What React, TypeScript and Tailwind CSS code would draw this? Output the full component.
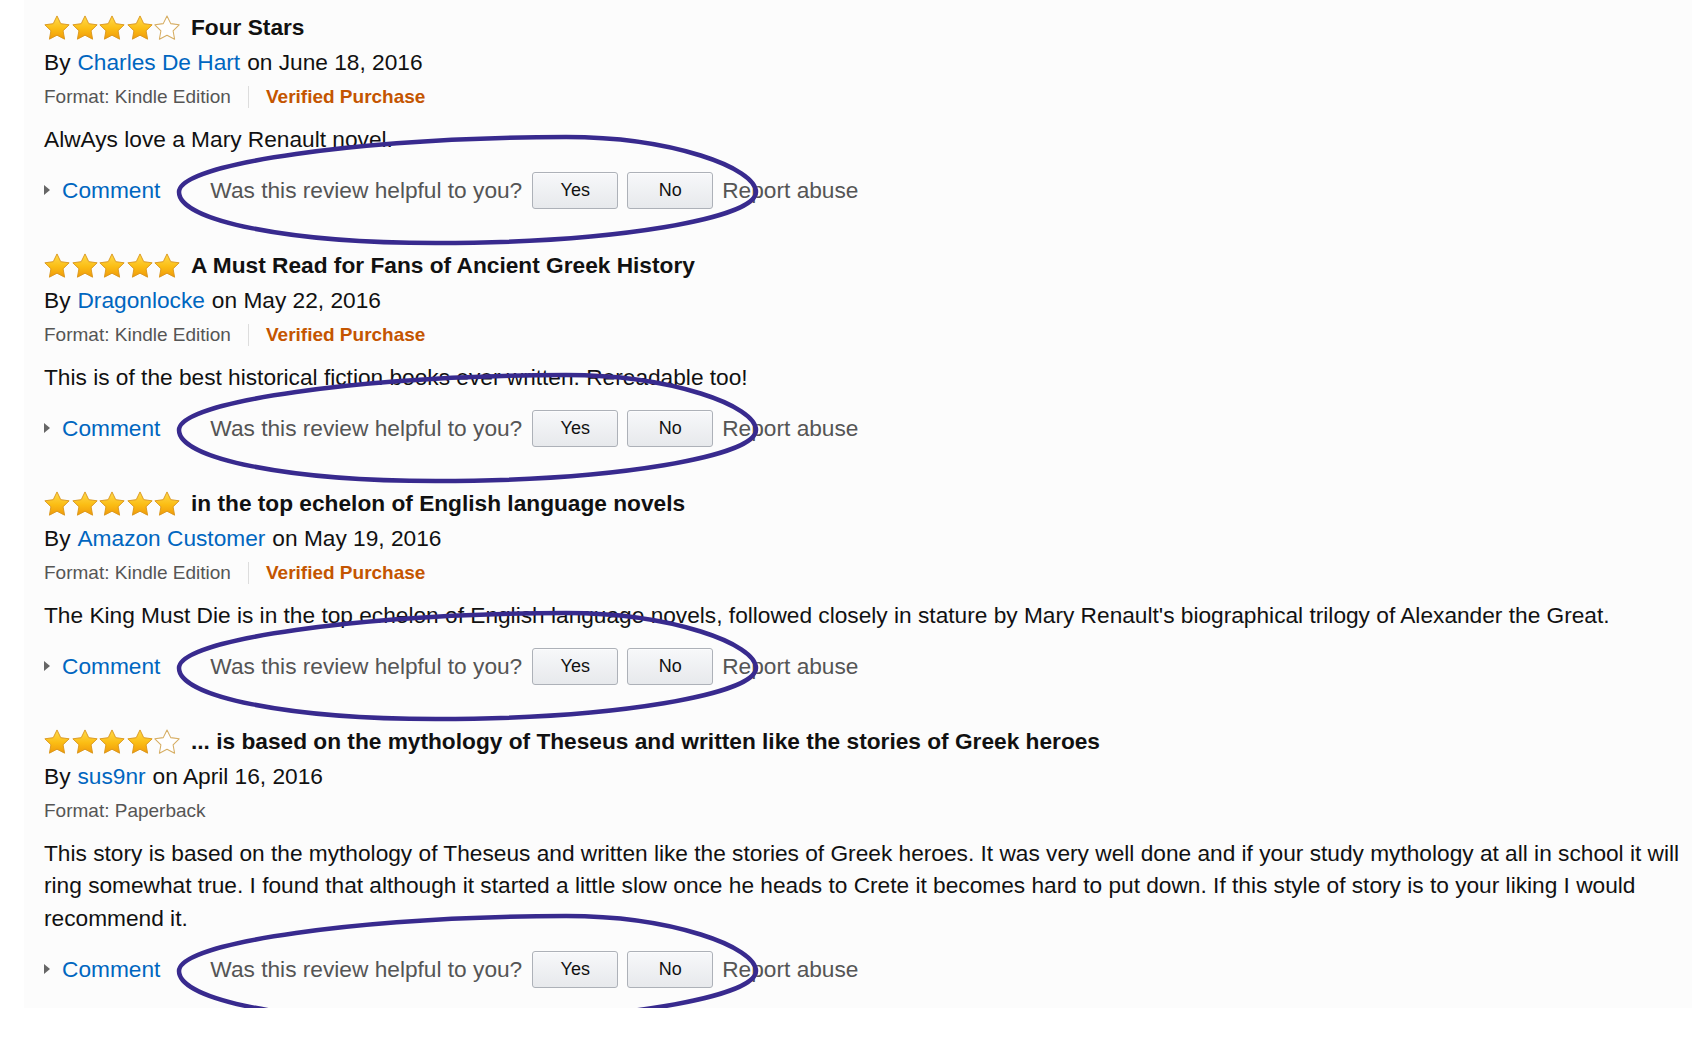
import React from 'react';

interface IReview {
	rating: number;
	title: string;
	author: string;
	date: string;
	format: string;
	verified: boolean;
	body: string[];
}

const reviews: IReview[] = [
	{
		rating: 4,
		title: 'Four Stars',
		author: 'Charles De Hart',
		date: 'June 18, 2016',
		format: 'Kindle Edition',
		verified: true,
		body: ['AlwAys love a Mary Renault novel.']
	},
	{
		rating: 5,
		title: 'A Must Read for Fans of Ancient Greek History',
		author: 'Dragonlocke',
		date: 'May 22, 2016',
		format: 'Kindle Edition',
		verified: true,
		body: ['This is of the best historical fiction books ever written. Rereadable too!']
	},
	{
		rating: 5,
		title: 'in the top echelon of English language novels',
		author: 'Amazon Customer',
		date: 'May 19, 2016',
		format: 'Kindle Edition',
		verified: true,
		body: [
			"The King Must Die is in the top echelon of English language novels, followed closely in stature by Mary Renault's biographical trilogy of Alexander the Great."
		]
	},
	{
		rating: 4,
		title: '... is based on the mythology of Theseus and written like the stories of Greek heroes',
		author: 'sus9nr',
		date: 'April 16, 2016',
		format: 'Paperback',
		verified: false,
		body: [
			'This story is based on the mythology of Theseus and written like the stories of Greek heroes. It was very well done and if your study mythology at all in school it will',
			'ring somewhat true. I found that although it started a little slow once he heads to Crete it becomes hard to put down. If this style of story is to your liking I would',
			'recommend it.'
		]
	}
];

const STAR = 'M12 1.4l3.2 6.6 7.2 1-5.2 5.1 1.3 7.2L12 17.9l-6.5 3.4 1.3-7.2L1.6 9l7.2-1z';

const Star = ({ filled }: { filled: boolean }) => (
	<svg viewBox="1 0.6 22 21.4" className="w-[26px] h-[25px]">
		{filled ? (
			<path d={STAR} fill="url(#starGold)" stroke="#d9961c" strokeWidth="0.8" strokeLinejoin="round" />
		) : (
			<path d={STAR} fill="#ffffff" stroke="#d6ad62" strokeWidth="0.9" strokeLinejoin="round" />
		)}
	</svg>
);

// hand-drawn style oval around the helpful prompt
const Scribble = () => (
	<svg
		width="600"
		height="122"
		viewBox="0 0 600 122"
		className="absolute left-[128px] top-[-40px] pointer-events-none overflow-visible">
		<path
			d="M7 62 C7 33 190 8 394 7 C500 7 584 38 584 62 C584 88 445 113 264 113 C118 113 7 91 7 62 Z"
			fill="none"
			stroke="#382a8e"
			strokeWidth="4.5"
			strokeLinejoin="round"
		/>
	</svg>
);

const Review = ({ review }: { review: IReview }) => {
	return (
		<div className="flex flex-col">
			<div className="h-[35px] flex items-center pt-[1px]">
				<div className="flex gap-[1.5px]">
					{[0, 1, 2, 3, 4].map((i) => (
						<Star key={i} filled={i < review.rating} />
					))}
				</div>
				<span className="ml-[11px] font-bold text-[#111]">{review.title}</span>
			</div>
			<div className="h-[35px] flex items-center text-[#111]">
				By<span className="text-[#0066c0] mx-[7px]">{review.author}</span>on {review.date}
			</div>
			<div className="h-[35px] flex items-center text-[19px] text-[#555]">
				<span>Format: {review.format}</span>
				{review.verified && (
					<>
						<span className="mx-[17px] w-px h-[22px] bg-[#ddd]" />
						<span className="font-bold text-[#c45500]">Verified Purchase</span>
					</>
				)}
			</div>
			<div className="mt-[8px] leading-[32.5px] text-[#111]">
				{review.body.map((line, i) => (
					<div key={i} className="whitespace-nowrap">
						{line}
					</div>
				))}
			</div>
			<div className="relative mt-[15px] h-[40px] flex items-center">
				<span className="w-0 h-0 border-y-[5px] border-y-transparent border-l-[6px] border-l-[#666]" />
				<span className="ml-[12px] text-[#0066c0]">Comment</span>
				<span className="ml-[50px] text-[#555]">Was this review helpful to you?</span>
				<button className="ml-[10px] w-[86px] h-[37px] rounded-[3px] border border-[#adb1b8] bg-gradient-to-b from-[#f7f8fa] to-[#e7e9ec] text-[18px] text-[#111] shadow-[0_1px_0_rgba(255,255,255,0.6)_inset]">
					Yes
				</button>
				<button className="ml-[9px] w-[86px] h-[37px] rounded-[3px] border border-[#adb1b8] bg-gradient-to-b from-[#f7f8fa] to-[#e7e9ec] text-[18px] text-[#111] shadow-[0_1px_0_rgba(255,255,255,0.6)_inset]">
					No
				</button>
				<span className="ml-[9px] text-[#555]">Report abuse</span>
				<Scribble />
			</div>
		</div>
	);
};

export default function App() {
	return (
		<div className="min-h-screen bg-white font-['Liberation_Sans',Arial,sans-serif] text-[22.7px]">
			<svg width="0" height="0" className="absolute">
				<defs>
					<linearGradient id="starGold" x1="0" y1="0" x2="0" y2="1">
						<stop offset="0" stopColor="#ffdb4d" />
						<stop offset="0.55" stopColor="#fbbd14" />
						<stop offset="1" stopColor="#f09a0a" />
					</linearGradient>
				</defs>
			</svg>
			<div className="ml-[24px] mr-[16px] bg-[#fcfcfc] overflow-hidden pl-[20px] pt-[9.5px] pb-[19px] flex flex-col gap-[37.5px]">
				{reviews.map((review, i) => (
					<Review key={i} review={review} />
				))}
			</div>
		</div>
	);
}
